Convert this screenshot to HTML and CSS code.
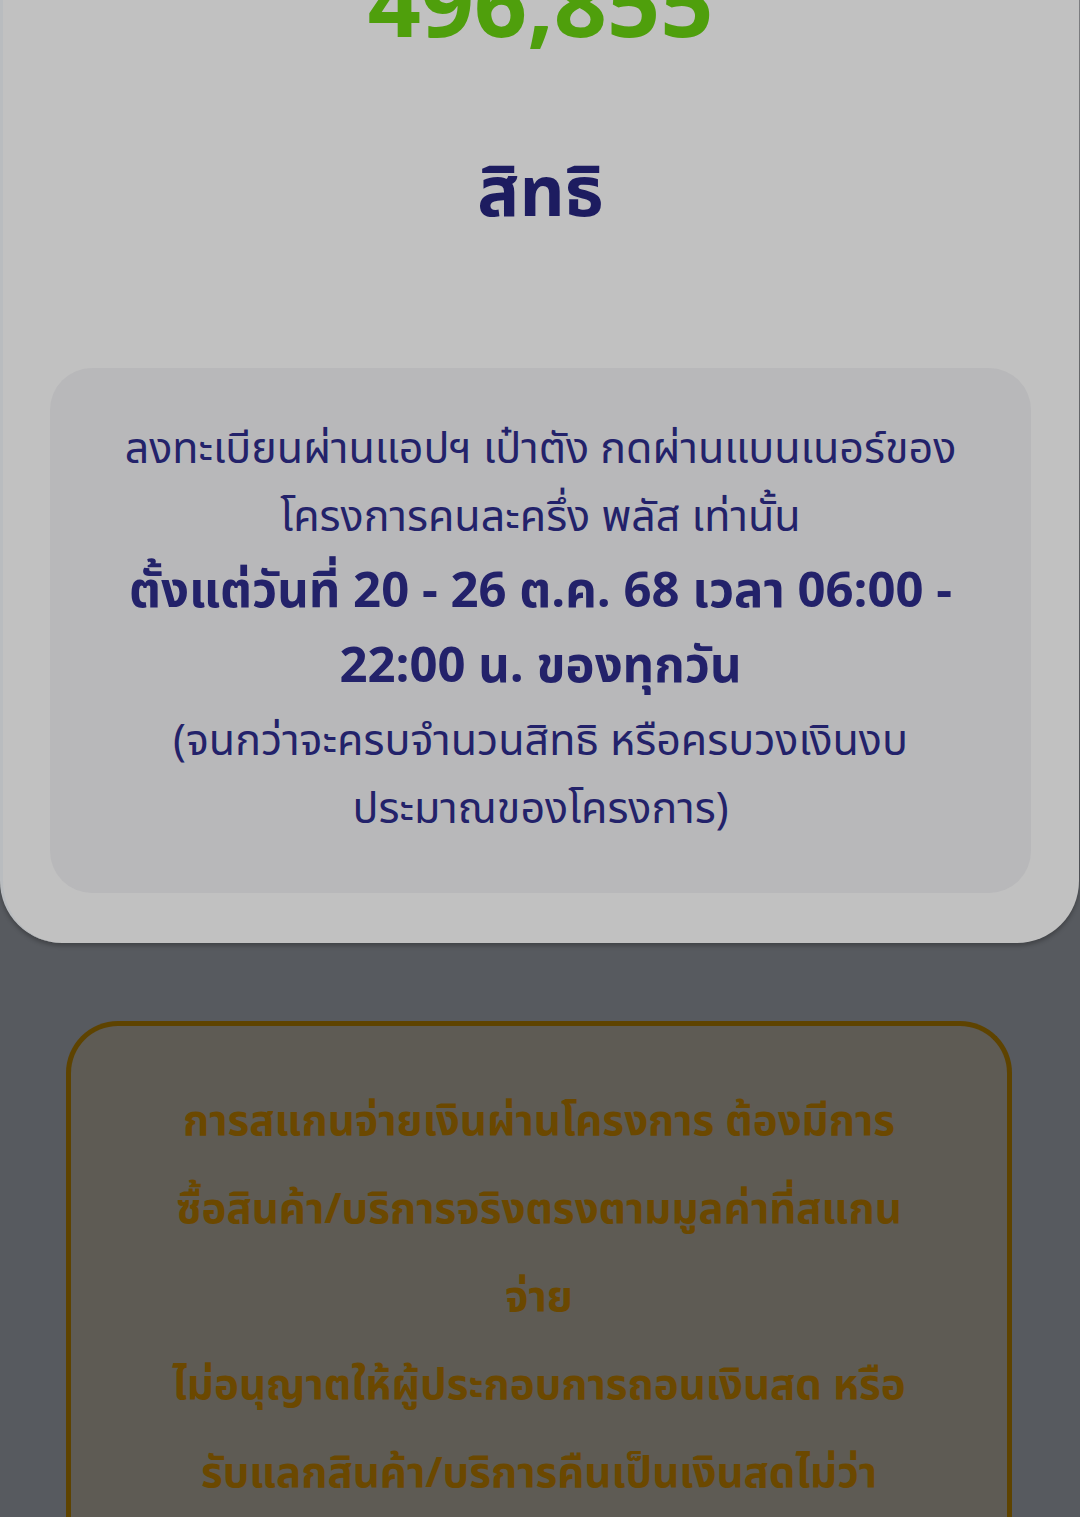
FILE: index.html
```html
<!DOCTYPE html>
<html lang="th">
<head>
<meta charset="utf-8">
<link rel="stylesheet" href="styles.css">
</head>
<body>
<div class="page">
  <section class="card">
    <div class="count">496,855</div>
    <div class="unit">สิทธิ</div>
    <div class="info">
      <p class="reg">ลงทะเบียนผ่านแอปฯ เป๋าตัง กดผ่านแบนเนอร์ของ<br>โครงการคนละครึ่ง พลัส เท่านั้น</p>
      <p class="bold">ตั้งแต่วันที่ 20 - 26 ต.ค. 68 เวลา 06:00 -<br>22:00 น. ของทุกวัน</p>
      <p class="reg">(จนกว่าจะครบจำนวนสิทธิ หรือครบวงเงินงบ<br>ประมาณของโครงการ)</p>
    </div>
  </section>
  <section class="warn">
    <p>การสแกนจ่ายเงินผ่านโครงการ ต้องมีการ<br>ซื้อสินค้า/บริการจริงตรงตามมูลค่าที่สแกน<br>จ่าย</p>
    <p>ไม่อนุญาตให้ผู้ประกอบการถอนเงินสด หรือ<br>รับแลกสินค้า/บริการคืนเป็นเงินสดไม่ว่า</p>
  </section>
</div>
</body>
</html>
```

FILE: styles.css
```css
html, body {
  margin: 0;
  padding: 0;
}
body {
  width: 1080px;
  height: 1517px;
  overflow: hidden;
  background: linear-gradient(180deg, #8c8d90 0px, #6a6c70 500px, #575a5f 900px, #575a5f 1517px);
  font-family: "Noto Sans Thai", "Noto Sans", "DejaVu Sans", sans-serif;
}
.page {
  margin-top: -58px;
}
.card {
  margin: 0 1px 0 0;
  background: #c1c1c1;
  border-left: 3px solid #b9bcbf;
  border-radius: 0 0 62px 62px;
  box-shadow: 0 3px 4px rgba(0, 0, 0, 0.25);
  padding: 0 48px 50px 47px;
  text-align: center;
}
.count {
  color: #4f9f0c;
  font-weight: 700;
  font-size: 93px;
  line-height: 110px;
  padding-top: 12px;
}
.unit {
  color: #1d1c60;
  font-weight: 700;
  font-size: 70px;
  line-height: 120px;
  margin-top: 71px;
  margin-bottom: 113px;
}
.info {
  background: #b8b8ba;
  border-radius: 42px;
  padding: 48px 10px 49px;
  color: #23226a;
}
.info p {
  margin: 0;
}
.info .reg {
  font-size: 43px;
  line-height: 68px;
}
.info .bold {
  margin: 3px 0;
  font-size: 49px;
  font-weight: 700;
  line-height: 75px;
}
.warn {
  margin: 78px 68px 0 66px;
  border: 5px solid #5e4300;
  border-bottom: none;
  border-radius: 52px 52px 0 0;
  background: #5e5b54;
  padding: 52px 10px 0;
  height: 600px;
  text-align: center;
  color: #6b4800;
  font-weight: 700;
  font-size: 42px;
  line-height: 88px;
}
.warn p {
  margin: 0;
}
```
